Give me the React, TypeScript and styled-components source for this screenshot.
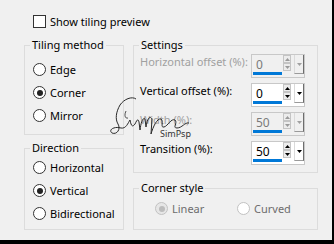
import styled, { createGlobalStyle } from 'styled-components'

const GlobalStyle = createGlobalStyle`
  html, body { margin: 0; padding: 0; background: #f0f0f0; }
  body {
    font-family: "Noto Sans", "Open Sans", sans-serif;
    font-size: 11px;
    color: #000;
  }
`

const Dialog = styled.div`
  width: 334px;
  height: 244px;
  box-sizing: border-box;
  padding: 12px 0 0 24px;
  background: #f0f0f0;
  border-right: 2px solid #000;
  border-bottom: 4px solid #000;
`

const CheckRow = styled.div`
  display: flex;
  align-items: center;
  gap: 4px;
  height: 18px;
  padding-left: 9px;
`

const CheckBox = styled.span`
  width: 13px;
  height: 13px;
  box-sizing: border-box;
  border: 1px solid #333;
  background: #fff;
`

const Body = styled.div`
  position: relative;
  display: flex;
  gap: 9px;
  margin-top: 7px;
`

const Column = styled.div<{ $w: number }>`
  display: flex;
  flex-direction: column;
  width: ${p => p.$w}px;
`

const Group = styled.fieldset<{ $pt: number; $pb: number; $mt?: number }>`
  margin: ${p => p.$mt ?? 0}px 0 0;
  padding: ${p => p.$pt}px 0 ${p => p.$pb}px;
  border: 1px solid #dcdcdc;
  min-width: 0;
`

const Legend = styled.legend`
  margin-left: 5px;
  padding: 0 2px;
  line-height: 16px;
`

const RadioOption = styled.div<{ $pl?: number; $w?: number }>`
  display: flex;
  align-items: center;
  gap: 4px;
  height: 23px;
  padding-left: ${p => p.$pl ?? 8}px;
  width: ${p => (p.$w ? `${p.$w}px` : 'auto')};
  box-sizing: border-box;
`

const RadioDot = styled.span<{ $checked?: boolean; $disabled?: boolean }>`
  width: 13px;
  height: 13px;
  box-sizing: border-box;
  border-radius: 50%;
  border: 1px solid ${p => (p.$disabled ? '#c2c2c2' : '#333')};
  background: ${p => (p.$disabled && p.$checked ? '#e6e6e6' : '#fff')};
  display: flex;
  align-items: center;
  justify-content: center;

  &::after {
    content: '';
    display: ${p => (p.$checked ? 'block' : 'none')};
    width: 6px;
    height: 6px;
    border-radius: 50%;
    background: ${p => (p.$disabled ? '#bcbcbc' : '#222')};
  }
`

const RadioText = styled.span<{ $disabled?: boolean }>`
  color: ${p => (p.$disabled ? '#6d6d6d' : '#000')};
`

const Rows = styled.div`
  display: flex;
  flex-direction: column;
  gap: 5px;
`

const SettingRow = styled.div`
  display: flex;
  align-items: flex-start;
  justify-content: space-between;
  height: 24px;
  padding: 0 12px 0 6px;
`

const SettingLabel = styled.span<{ $disabled?: boolean }>`
  line-height: 16px;
  color: ${p => (p.$disabled ? '#a0a0a0' : '#000')};
`

const Spin = styled.div<{ $disabled?: boolean }>`
  display: flex;
  width: 54px;
  height: 24px;
  box-sizing: border-box;
  border: 1px solid #c8c8c8;
  background: ${p => (p.$disabled ? '#f0f0f0' : '#fff')};
`

const Field = styled.div`
  display: flex;
  flex-direction: column;
  width: 30px;
  padding-top: 3px;
`

const Value = styled.span<{ $disabled?: boolean }>`
  line-height: 14px;
  padding-left: 4px;
  font-size: 12px;
  color: ${p => (p.$disabled ? '#7a7a7a' : '#000')};
`

const Bar = styled.div`
  height: 3px;
  margin-left: 1px;
  background: #0078d7;
`

const Arrows = styled.div`
  display: flex;
  flex-direction: column;
  margin-left: 1px;
`

const ArrowBtn = styled.div`
  width: 8px;
  height: 8px;
  box-sizing: border-box;
  border: 1px solid #c4c4c4;
  background: #ececec;
  display: flex;
  align-items: center;
  justify-content: center;
`

const DropBtn = styled.div`
  width: 10px;
  height: 19px;
  margin-left: 3px;
  box-sizing: border-box;
  border-left: 1px solid #dadada;
  border-right: 1px solid #6d6d6d;
  border-bottom: 1px solid #9a9a9a;
  display: flex;
  justify-content: center;
  padding-top: 8px;
`

const CornerRow = styled.div`
  display: flex;
`

const Watermark = styled.div`
  position: absolute;
  left: 86px;
  top: 59px;
  width: 80px;
  height: 44px;
  pointer-events: none;
`

const WatermarkText = styled.span`
  position: absolute;
  left: 50px;
  top: 33px;
  font-size: 9px;
  line-height: 10px;
  color: #333;
`

function Tri({ up, color }: { up?: boolean; color: string }) {
  return (
    <svg width="5" height="3" viewBox="0 0 5 3">
      <polygon points={up ? '0,3 5,3 2.5,0' : '0,0 5,0 2.5,3'} fill={color} />
    </svg>
  )
}

function SpinBox({ value, disabled }: { value: string; disabled?: boolean }) {
  const c = disabled ? '#9a9a9a' : '#000'
  return (
    <Spin $disabled={disabled}>
      <Field>
        <Value $disabled={disabled}>{value}</Value>
        <Bar />
      </Field>
      <Arrows>
        <ArrowBtn><Tri up color={c} /></ArrowBtn>
        <ArrowBtn><Tri color={c} /></ArrowBtn>
      </Arrows>
      <DropBtn><Tri color={disabled ? '#a0a0a0' : '#000'} /></DropBtn>
    </Spin>
  )
}

function Radio({ label, checked, disabled, pl, w }: { label: string; checked?: boolean; disabled?: boolean; pl?: number; w?: number }) {
  return (
    <RadioOption $pl={pl} $w={w}>
      <RadioDot $checked={checked} $disabled={disabled} />
      <RadioText $disabled={disabled}>{label}</RadioText>
    </RadioOption>
  )
}

export default function App() {
  return (
    <>
      <GlobalStyle />
      <Dialog>
        <CheckRow>
          <CheckBox />
          <span>Show tiling preview</span>
        </CheckRow>

        <Body>
          <Column $w={100}>
            <Group $pt={5} $pb={7}>
              <Legend>Tiling method</Legend>
              <Radio label="Edge" />
              <Radio label="Corner" checked />
              <Radio label="Mirror" />
            </Group>
            <Group $pt={0} $pb={4} $mt={5}>
              <Legend>Direction</Legend>
              <Radio label="Horizontal" />
              <Radio label="Vertical" checked />
              <Radio label="Bidirectional" />
            </Group>
          </Column>

          <Column $w={185}>
            <Group $pt={1} $pb={7}>
              <Legend>Settings</Legend>
              <Rows>
                <SettingRow>
                  <SettingLabel $disabled>Horizontal offset (%):</SettingLabel>
                  <SpinBox value="0" disabled />
                </SettingRow>
                <SettingRow>
                  <SettingLabel>Vertical offset (%):</SettingLabel>
                  <SpinBox value="0" />
                </SettingRow>
                <SettingRow>
                  <SettingLabel $disabled>Width (%):</SettingLabel>
                  <SpinBox value="50" disabled />
                </SettingRow>
                <SettingRow>
                  <SettingLabel>Transition (%):</SettingLabel>
                  <SpinBox value="50" />
                </SettingRow>
              </Rows>
            </Group>
            <Group $pt={1} $pb={9} $mt={7}>
              <Legend>Corner style</Legend>
              <CornerRow>
                <Radio label="Linear" checked disabled pl={21} w={103} />
                <Radio label="Curved" disabled pl={0} />
              </CornerRow>
            </Group>
          </Column>

          <Watermark>
            <svg width="80" height="44" viewBox="110 95 80 44">
              <path
                d="M136 98 C132 95, 124 98, 120 104 C116 111, 115 118, 118 123 C121 128, 117 134, 112 132 C108 129, 114 125, 121 127 C126 128, 128 122, 130 119 C131 124, 132 127, 135 123 C137 119, 138 117, 139 121 L140 129 C141 121, 143 116, 145 118 L146 126 C147 118, 150 114, 152 118 L151 133 C153 126, 157 117, 161 118 C164 120, 160 127, 164 126 C168 125, 171 117, 175 119 C178 122, 172 127, 177 127 C182 127, 185 121, 189 122"
                fill="none"
                stroke="#2a2a2a"
                strokeWidth="1"
              />
              <path d="M126 110 C124 114, 125 118, 128 117" fill="none" stroke="#2a2a2a" strokeWidth="0.8" />
            </svg>
            <WatermarkText>SimPsp</WatermarkText>
          </Watermark>
        </Body>
      </Dialog>
    </>
  )
}
